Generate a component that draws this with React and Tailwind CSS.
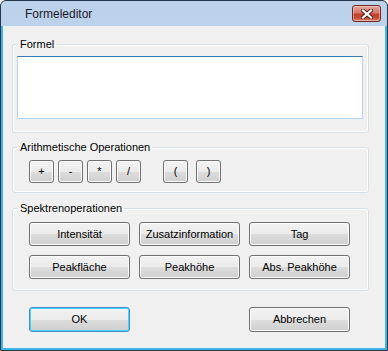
import React from 'react';

const font = { fontFamily: '"Liberation Sans", Arial, sans-serif' };

const WinButton = ({ label, className = '', isDefault = false }) => (
  <button
    className={`flex items-center justify-center rounded-[3px] border text-[11px] leading-none text-black bg-[linear-gradient(#f2f2f2_0%,#ebebeb_50%,#dddddd_50%,#cfcfcf_100%)] ${
      isDefault
        ? 'border-[#3c8fd0] shadow-[inset_0_0_0_1px_#4fd0f7]'
        : 'border-[#707070] shadow-[inset_0_0_0_1px_#fbfbfb]'
    } ${className}`}
  >
    {label}
  </button>
);

const Group = ({ title, children, className = '' }) => (
  <fieldset className={`w-[357px] rounded-[3px] border border-[#d5dfe5] shadow-[inset_0_0_0_1px_#ffffff] ${className}`}>
    <legend className="ml-[5px] px-[2px] text-[11px] leading-[13px] text-black">{title}</legend>
    {children}
  </fieldset>
);

export default function App() {
  return (
    <div style={font} className="w-[388px] h-[351px] flex flex-col rounded-t-[6px] border border-[#24364b] bg-[linear-gradient(#bcd2ea,#c9dcf0)]">
      {/* Title bar */}
      <div className="h-[25px] flex items-start justify-between">
        <span className="pl-[24px] pt-[6px] text-[12px] leading-[14px] text-[#1a1a2a]">Formeleditor</span>
        <div className="mt-[4px] mr-[6px] w-[29px] h-[17px] rounded-[3px] border border-[#6b2a22] bg-[linear-gradient(#e6a79a_0%,#d4786a_45%,#c4432f_55%,#c94a35_80%,#dc8b70_100%)] flex items-center justify-center shadow-[inset_0_0_0_1px_rgba(255,220,210,0.5)]">
          <svg width="12" height="10" viewBox="0 0 12 10">
            <path d="M2 1.5 L10 8.5 M10 1.5 L2 8.5" stroke="#4a1d18" strokeWidth="4" strokeLinecap="square" />
            <path d="M2 1.5 L10 8.5 M10 1.5 L2 8.5" stroke="#ffffff" strokeWidth="2.2" strokeLinecap="square" />
          </svg>
        </div>
      </div>

      {/* Client area */}
      <div className="flex-1 border-x-2 border-b-2 border-[#3fb4ea]">
        <div className="h-full bg-[#f0f0f0] pl-[9px] pt-[12px]">
          <Group title="Formel">
            <div className="pl-[4px] pt-[5px] pb-[13px]">
              <div className="w-[346px] h-[63px] bg-white border border-[#b5d3ea] border-t-[#3d7bad]" />
            </div>
          </Group>

          <Group title="Arithmetische Operationen" className="mt-[8px]">
            <div className="flex pl-[16px] pt-[6px] pb-[9px]">
              <WinButton label="+" className="w-[25px] h-[23px]" />
              <WinButton label="-" className="w-[25px] h-[23px] ml-[4px]" />
              <WinButton label="*" className="w-[25px] h-[23px] ml-[4px]" />
              <WinButton label="/" className="w-[25px] h-[23px] ml-[4px]" />
              <WinButton label="(" className="w-[25px] h-[23px] ml-[22px]" />
              <WinButton label=")" className="w-[25px] h-[23px] ml-[8px]" />
            </div>
          </Group>

          <Group title="Spektrenoperationen" className="mt-[9px]">
            <div className="grid grid-cols-[101px_101px_101px] gap-x-[9px] gap-y-[9px] pl-[16px] pt-[7px] pb-[11px]">
              <WinButton label="Intensität" className="h-[24px]" />
              <WinButton label="Zusatzinformation" className="h-[24px]" />
              <WinButton label="Tag" className="h-[24px]" />
              <WinButton label="Peakfläche" className="h-[24px]" />
              <WinButton label="Peakhöhe" className="h-[24px]" />
              <WinButton label="Abs. Peakhöhe" className="h-[24px]" />
            </div>
          </Group>

          <div className="flex gap-[119px] ml-[17px] mt-[16px]">
            <WinButton label="OK" isDefault className="w-[101px] h-[25px]" />
            <WinButton label="Abbrechen" className="w-[101px] h-[25px]" />
          </div>
        </div>
      </div>
    </div>
  );
}
